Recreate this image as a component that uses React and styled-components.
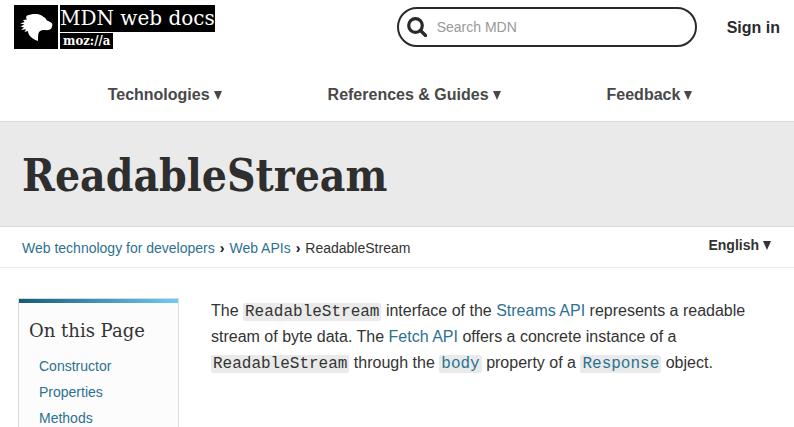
import React from 'react';
import styled, { createGlobalStyle } from 'styled-components';

const slab = '"DejaVu Serif", serif';
const slabCondensed = '"DejaVu Serif Condensed", "DejaVu Serif", serif';
const mono = '"Liberation Mono", monospace';

const GlobalStyle = createGlobalStyle`
  *, *::before, *::after { box-sizing: border-box; }
  body {
    margin: 0;
    background: #fff;
    color: #333;
    font-family: "Liberation Sans", Arial, sans-serif;
    font-size: 16px;
    line-height: 26px;
  }
`;

const Link = styled.a`
  color: #2d7190;
  text-decoration: none;
  &:hover { text-decoration: underline; }
`;

const Header = styled.header`
  border-bottom: 1px solid #d4dddb;
`;

const TopBar = styled.div`
  display: flex;
  align-items: flex-start;
  padding: 5px 14px 0;
`;

const Logo = styled.a`
  display: flex;
  gap: 2px;
  color: #fff;
  font-family: ${slab};
  text-decoration: none;
  white-space: nowrap;
`;

const LogoMark = styled.svg`
  display: block;
  width: 44px;
  height: 44px;
  background: #000;
`;

const LogoWords = styled.span`
  display: flex;
  flex-direction: column;
  align-items: flex-start;
  gap: 1px;
`;

const LogoName = styled.span`
  background: #000;
  font-size: 20px;
  line-height: 27px;
`;

const LogoOwner = styled.span`
  padding: 0 3px;
  background: #000;
  font-family: ${slabCondensed};
  font-size: 13px;
  font-weight: 700;
  line-height: 16px;
`;

const SearchForm = styled.form`
  display: flex;
  align-items: center;
  gap: 10px;
  width: 300px;
  height: 40px;
  margin: 2px 30px 0 auto;
  padding: 0 16px 0 8px;
  border: 2px solid #2a2a2c;
  border-radius: 20px;
`;

const SearchIcon = styled.svg`
  flex: none;
  width: 20px;
  height: 20px;
`;

const SearchInput = styled.input`
  flex: 1;
  min-width: 0;
  padding: 0;
  border: 0;
  outline: 0;
  background: transparent;
  color: #333;
  font: 14px "Liberation Sans", Arial, sans-serif;
  &::placeholder { color: #999; opacity: 1; }
`;

const SignIn = styled.a`
  margin-top: 10px;
  color: #2a2a2c;
  font-weight: 700;
  text-decoration: none;
`;

const Nav = styled.nav`
  display: flex;
  justify-content: center;
  gap: 106px;
  padding: 33px 0 13px 6px;
`;

const MenuButton = styled.button`
  display: flex;
  align-items: center;
  gap: 4px;
  padding: 0;
  border: 0;
  background: none;
  color: ${(p) => (p.$small ? '#333' : '#484848')};
  font: 700 ${(p) => (p.$small ? '14px' : '16px')} / 26px "Liberation Sans", Arial, sans-serif;
  white-space: nowrap;
  cursor: pointer;
`;

const Triangle = styled.svg`
  width: 8px;
  height: 9px;
  fill: currentColor;
`;

const TitleBand = styled.div`
  padding: 24px 22px 20px;
  border-bottom: 1px solid #d4dddb;
  background: #eaeaea;
`;

const Title = styled.h1`
  margin: 0;
  color: #2e2e2e;
  font: 700 44px / 60px ${slabCondensed};
`;

const CrumbBar = styled.div`
  display: flex;
  align-items: flex-start;
  justify-content: space-between;
  padding: 5px 23px 6px 22px;
  border-bottom: 1px solid #eaeaea;
`;

const Crumbs = styled.ol`
  display: flex;
  margin: 3px 0 0;
  padding: 0;
  list-style: none;
  font-size: 14px;
`;

const Crumb = styled.li`
  display: flex;
  & + &::before {
    content: "›";
    padding: 0 5px;
    color: #111;
    font-weight: 700;
  }
`;

const Page = styled.div`
  display: grid;
  grid-template-columns: 161px minmax(0, 1fr);
  gap: 32px;
  padding: 30px 32px 0 18px;
`;

const Sidebar = styled.aside`
  padding: 15px 10px 0;
  border: 1px solid #d4dddb;
  border-bottom: 0;
  background: linear-gradient(90deg, #17597b, #6fcdf1) top / 100% 4px no-repeat #fcfcfc;
`;

const SidebarTitle = styled.h2`
  margin: 0 0 5px;
  font: 400 18px / 34px ${slab};
`;

const SectionList = styled.ul`
  margin: 0;
  padding: 0 0 0 10px;
  list-style: none;
  font-size: 14px;
`;

const Summary = styled.p`
  margin: 0;
`;

const Code = styled.code`
  padding: 0 2px;
  border-radius: 2px;
  background: #eaeaea;
  font: 16px / 16px ${mono};
`;

const Arrow = () => (
  <Triangle viewBox="0 0 8 9" aria-hidden="true">
    <path d="M0 0h8L4 9z" />
  </Triangle>
);

const menus = ['Technologies', 'References & Guides', 'Feedback'];
const sections = ['Constructor', 'Properties', 'Methods'];

export default function App() {
  return (
    <>
      <GlobalStyle />
      <Header>
        <TopBar>
          <Logo href="#" aria-label="MDN web docs, moz://a">
            <LogoMark viewBox="0 0 44 44" aria-hidden="true">
              <path
                fill="#fff"
                d="M13 10.500c3.500-1.400 8-2 11.500-1.200 2 .5 3.500 1.500 5 2.700 1.600.6 2.500 1.800 3.300 3.500 1.800.8 4.200 1.600 5.200 2.700.8 1.800.2 3.800-1 5.600-1 1.200-3.500 1.600-6.500 1.200-2.500 0-4.600.6-5.700 2.500-.9 2.200-.7 5-.8 8.500-3.500-1-6.800-3-8.800-6-.8-1.200-1.200-2.500-1.300-4l-3.400 1 1.600-2.700-5.100.7 3-2.500-3.500-1 4-1.900-4.300-1.100 4.400-1.500-1.600-2 3.800-.5-.8-2.200z"
              />
            </LogoMark>
            <LogoWords>
              <LogoName>MDN web docs</LogoName>
              <LogoOwner>moz://a</LogoOwner>
            </LogoWords>
          </Logo>
          <SearchForm role="search">
            <SearchIcon viewBox="0 0 20 20" fill="none" stroke="#2a2a2c" aria-hidden="true">
              <circle cx="8.500" cy="8.500" r="6.800" strokeWidth="3.200" />
              <path d="M13.500 13.500l5 5" strokeWidth="3.400" strokeLinecap="round" />
            </SearchIcon>
            <SearchInput type="search" placeholder="Search MDN" aria-label="Search MDN" />
          </SearchForm>
          <SignIn href="#">Sign in</SignIn>
        </TopBar>
        <Nav aria-label="Main">
          {menus.map((name) => (
            <MenuButton key={name} type="button">
              {name}
              <Arrow />
            </MenuButton>
          ))}
        </Nav>
      </Header>
      <TitleBand>
        <Title>ReadableStream</Title>
      </TitleBand>
      <CrumbBar>
        <Crumbs aria-label="Breadcrumbs">
          <Crumb><Link href="#">Web technology for developers</Link></Crumb>
          <Crumb><Link href="#">Web APIs</Link></Crumb>
          <Crumb>ReadableStream</Crumb>
        </Crumbs>
        <MenuButton type="button" $small>
          English
          <Arrow />
        </MenuButton>
      </CrumbBar>
      <Page>
        <Sidebar>
          <SidebarTitle>On this Page</SidebarTitle>
          <SectionList>
            {sections.map((name) => (
              <li key={name}><Link href={`#${name}`}>{name}</Link></li>
            ))}
          </SectionList>
        </Sidebar>
        <main>
          <Summary>
            The <Code>ReadableStream</Code> interface of the <Link href="#">Streams API</Link>{' '}
            represents a readable stream of byte data. The <Link href="#">Fetch API</Link> offers
            a concrete instance of a <Code>ReadableStream</Code> through the{' '}
            <Link href="#"><Code>body</Code></Link> property of a{' '}
            <Link href="#"><Code>Response</Code></Link> object.
          </Summary>
        </main>
      </Page>
    </>
  );
}
